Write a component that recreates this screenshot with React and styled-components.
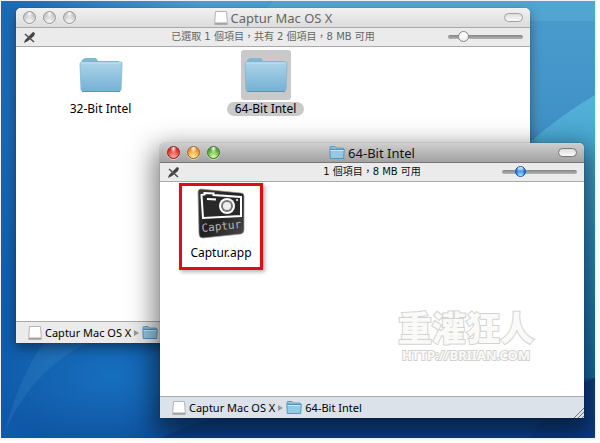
import React, { useState } from 'react';
import styled, { createGlobalStyle } from 'styled-components';

const GlobalStyle = createGlobalStyle`
  body {
    margin: 0;
    background: #fff;
    font-family: "Noto Sans", "Noto Sans CJK TC", sans-serif;
    color: #000;
  }
  * {
    box-sizing: border-box;
  }
`;
const Desktop = styled.main`
  position: relative;
  height: calc(100vh - 6px);
  margin: 1px 5px 5px 1px;
  overflow: hidden;
  background: #0f5cab;
  box-shadow: 0 0 4px #d5dbe6;
`;
const Wallpaper = styled.svg`
  display: block;
  width: 100%;
  height: 100%;
`;
const Window = styled.section`
  position: absolute;
  inset: ${({ $inset }) => $inset};
  display: flex;
  flex-direction: column;
  overflow: hidden;
  border-radius: 5px 5px 0 0;
  background: #fff;
  box-shadow: ${({ $active }) => $active
    ? "0 0 1px rgba(0, 0, 0, 0.6), 0 10px 26px 6px rgba(0, 0, 0, 0.5)"
    : "0 0 1px rgba(0, 0, 0, 0.4), 0 5px 12px rgba(0, 0, 0, 0.4)"};
`;
const TitleBar = styled.header`
  display: grid;
  grid-template-columns: 68px 1fr 68px;
  align-items: center;
  flex: none;
  height: 20px;
  padding: 0 7px;
  border-bottom: 1px solid ${({ $active }) => $active ? "#777" : "#a9a9a9"};
  background: ${({ $active }) => $active
    ? "linear-gradient(#cfcfcf, #a2a2a2)"
    : "linear-gradient(#f1f1f1, #dcdcdc)"};
`;
const Lights = styled.div`
  display: flex;
  gap: 7px;
`;
const Light = styled.button`
  width: 13px;
  height: 13px;
  padding: 0;
  border: 1px solid ${({ $edge }) => $edge};
  border-radius: 50%;
  background:
    radial-gradient(ellipse at 50% 12%, rgba(255, 255, 255, 0.95) 0, rgba(255, 255, 255, 0) 38%),
    radial-gradient(circle at 50% 90%, ${({ $glow }) => $glow} 10%, ${({ $fill }) => $fill} 65%);
  box-shadow: 0 1px 0 rgba(255, 255, 255, 0.5);
`;
const Title = styled.h1`
  display: flex;
  align-items: center;
  justify-content: center;
  gap: 3px;
  margin: 0;
  font-size: 13px;
  font-weight: 400;
  line-height: 18px;
  white-space: nowrap;
  color: ${({ $active }) => $active ? "#111" : "#666"};
`;
const Pill = styled.button`
  justify-self: end;
  width: 19px;
  height: 9px;
  padding: 0;
  border: 1px solid ${({ $active }) => $active ? "#777" : "#a0a0a0"};
  border-radius: 5px;
  background: linear-gradient(#ddd, #fafafa);
`;
const StatusBar = styled.div`
  display: grid;
  grid-template-columns: 76px 1fr 76px;
  align-items: center;
  flex: none;
  height: 19px;
  padding: 0 7px;
  border-bottom: 1px solid #aaa;
  background: #ebebeb;
`;
const Status = styled.span`
  font-family: "DejaVu Sans", "Noto Sans CJK TC", sans-serif;
  font-size: 10px;
  line-height: 16px;
  text-align: center;
  white-space: nowrap;
  color: ${({ $active }) => $active ? "#111" : "#666"};
`;
const Slider = styled.input`
  justify-self: end;
  width: 75px;
  height: 12px;
  margin: 0;
  appearance: none;
  background: transparent;

  &::-webkit-slider-runnable-track {
    height: 4px;
    border-radius: 2px;
    background: linear-gradient(#858585, #b5b5b5);
  }
  &::-webkit-slider-thumb {
    appearance: none;
    width: 11px;
    height: 11px;
    margin-top: -4px;
    border: 1px solid ${({ $active }) => $active ? "#1c56a8" : "#858585"};
    border-radius: 50%;
    background: ${({ $active }) => $active
      ? "linear-gradient(90deg, #2367c4, transparent 30%, transparent 70%, #2367c4), linear-gradient(#e4f4ff, #4e9ee8 50%, #9beaff)"
      : "linear-gradient(#fff, #eee)"};
  }
`;
const Body = styled.div`
  display: flex;
  align-items: flex-start;
  flex: 1;
  min-height: 0;
  padding: ${({ $pad }) => $pad};
`;
const Item = styled.figure`
  display: flex;
  flex-direction: column;
  align-items: center;
  gap: ${({ $gap }) => $gap || "2px"};
  width: 165px;
  margin: 0;
`;
const IconFrame = styled.div`
  display: grid;
  place-items: center;
  width: 50px;
  height: 50px;
  border-radius: 3px;
  background: ${({ $selected }) => $selected ? "#c9c9c9" : "none"};
`;
const Label = styled.figcaption`
  padding: 0 8px;
  border-radius: 7px;
  font-size: 12px;
  line-height: 14px;
  white-space: nowrap;
  background: ${({ $selected }) => $selected ? "#c9c9c9" : "none"};
`;
const Highlight = styled.div`
  display: flex;
  justify-content: center;
  width: 84px;
  height: 87px;
  padding-top: 2px;
  border: 3px solid #e30b12;
  box-shadow: 2px 2px 4px rgba(0, 0, 0, 0.3);
`;
const Watermark = styled.div`
  display: flex;
  flex-direction: column;
  align-self: flex-end;
  margin-left: auto;
  text-align: center;
  color: #fafaf8;
  -webkit-text-stroke: 2px #d3d3d0;
  paint-order: stroke;
`;
const WatermarkName = styled.div`
  font-family: "Noto Sans CJK TC", sans-serif;
  font-size: 34px;
  font-weight: 900;
  line-height: 36px;
`;
const WatermarkUrl = styled.div`
  font-size: 13px;
  font-weight: 700;
  line-height: 20px;
`;
const PathBar = styled.footer`
  display: flex;
  align-items: center;
  flex: none;
  gap: 3px;
  height: 22px;
  padding-left: 12px;
  border-top: 1px solid #aaa;
  background: ${({ $active }) => $active ? "#dbe2ea" : "#ebebeb"};
  font-size: 11px;
  line-height: 16px;
  white-space: nowrap;
`;
const Arrow = styled.svg`
  width: 5px;
  height: 6px;
  fill: #999;
`;
const Grip = styled.svg`
  align-self: flex-end;
  width: 12px;
  height: 12px;
  margin-left: auto;
`;

function Folder({ width, height }) {
  return (
    <svg width={width} height={height} viewBox="0 0 44 36" aria-hidden="true">
      <defs>
        <linearGradient id="folderFront" x1="0" y1="0" x2="0" y2="1">
          <stop offset="0" stopColor="#acd4e8" />
          <stop offset="1" stopColor="#75b1d4" />
        </linearGradient>
      </defs>
      <path d="M2 7l1-4 3-2h11l2 3h20l3 2v2H2z" fill="#82b7d3" />
      <path d="M1 7q0-2 2-2h39q1 0 1 2l-1 26q0 1-2 1H4q-2 0-2-1z" fill="url(#folderFront)" stroke="#82b5d0" strokeWidth=".8" />
      <path d="M2 6h40" stroke="#c3e4f2" />
      <path d="M3 34.5h38" stroke="#5c93b3" />
    </svg>
  );
}

function SmallFolder() {
  return (
    <svg width="16" height="13" viewBox="0 0 16 13" aria-hidden="true">
      <path d="M1 3V1.5q0-1 1-1h4l1.500 1.500H14l1 1v1z" fill="#8fc3df" stroke="#4d8fb8" strokeWidth=".8" />
      <path d="M.8 3.500h14.400l-.5 9H1.300z" fill="#94c9e5" stroke="#4d8fb8" strokeWidth=".9" />
      <path d="M1.500 4.500h13" stroke="#c8e6f4" />
    </svg>
  );
}

function Disk() {
  return (
    <svg width="14" height="14" viewBox="0 0 14 14" aria-hidden="true">
      <path d="M1.5.5h11l.8 11v2H.7v-2z" fill="#fdfdfd" stroke="#b5b5b5" />
      <path d="M1 11.5h12v2H1z" fill="#a5a5a5" />
    </svg>
  );
}

function Pencil() {
  return (
    <svg width="13" height="13" viewBox="0 0 13 13" aria-label="Read only" role="img">
      <path d="M1 12l1-3 6-6 2-2 2 1-1 3-6 5z" fill="#444" />
      <path d="M2 3l9 8" stroke="#555" strokeWidth="1.6" />
    </svg>
  );
}

function CapturIcon() {
  return (
    <svg width="50" height="52" viewBox="0 0 50 52" aria-hidden="true">
      <defs>
        <linearGradient id="plate" x1="0" y1="0" x2="1" y2="1">
          <stop offset="0" stopColor="#3d3d3d" />
          <stop offset=".5" stopColor="#1f1f1f" />
          <stop offset="1" stopColor="#4c4c4c" />
        </linearGradient>
      </defs>
      <path d="M5 1Q2 1 2 4l1 42q0 4 4 4l38-4q3-1 3-4V8q0-3-3-3z" fill="url(#plate)" stroke="#999" strokeWidth=".7" />
      <path d="M5.500 7l3-.5V5l9 .5V7L45 9v19L7 30z" fill="#282828" stroke="#fff" strokeWidth="2" />
      <path d="M11 11l9 .5" stroke="#fff" strokeWidth="2" />
      <circle cx="31" cy="18" r="8" fill="#fff" />
      <circle cx="31" cy="18" r="6" fill="#777" />
      <circle cx="31" cy="18" r="4" fill="#eee" />
      <circle cx="41" cy="12" r="1" fill="#fff" />
      <text x="6" y="44" transform="rotate(-6 6 44)" fill="#b5b5b5" fontFamily="DejaVu Sans Mono, monospace" fontSize="11">Captur</text>
    </svg>
  );
}

function Background() {
  return (
    <Wallpaper viewBox="0 0 594 437" preserveAspectRatio="none" aria-hidden="true">
      <defs>
        <linearGradient id="sky" x1="0" y1="0" x2="0" y2="1">
          <stop offset="0" stopColor="#4b9dce" />
          <stop offset=".3" stopColor="#4090c6" />
          <stop offset=".65" stopColor="#1562b0" />
          <stop offset="1" stopColor="#0e4c99" />
        </linearGradient>
        <linearGradient id="left" x1="0" y1="0" x2="1" y2="0">
          <stop offset="0" stopColor="#0f5cab" stopOpacity=".8" />
          <stop offset="1" stopColor="#0f5cab" stopOpacity="0" />
        </linearGradient>
        <linearGradient id="beam" x1="0" y1="0" x2="0" y2="1">
          <stop offset="0" stopColor="#55b3da" />
          <stop offset=".5" stopColor="#2f8dbf" />
          <stop offset="1" stopColor="#176ba9" />
        </linearGradient>
        <radialGradient id="glow">
          <stop offset="0" stopColor="#176fbe" />
          <stop offset="1" stopColor="#176fbe" stopOpacity="0" />
        </radialGradient>
      </defs>
      <path d="M0 0h594v437H0z" fill="url(#sky)" />
      <path d="M0 0h200v437H0z" fill="url(#left)" />
      <path d="M272 0h322v20H255z" fill="#62b9d6" opacity=".3" />
      <path d="M594 94Q560 114 529 141v240l65-4z" fill="url(#beam)" />
      <path d="M594 377Q560 388 529 437h65z" fill="#0c418a" />
      <ellipse cx="110" cy="375" rx="120" ry="70" fill="url(#glow)" />
      <path d="M4 430Q20 370 46 338h50Q34 363 4 430z" fill="#4a97cf" opacity=".2" />
      <path d="M160 437q40-20 80-22h354v22z" fill="#0a3c83" opacity=".5" />
    </Wallpaper>
  );
}

const activeLights = [
  { name: "Close", edge: "#8d2424", fill: "#d93431", glow: "#ff9890" },
  { name: "Minimize", edge: "#a2652a", fill: "#ec9130", glow: "#ffe68c" },
  { name: "Zoom", edge: "#41722f", fill: "#57a63d", glow: "#c9f590" },
];
const idleLights = activeLights.map(({ name }) => ({ name, edge: "#979797", fill: "#c9c9c9", glow: "#f2f2f2" }));

function FinderWindow({ title, icon, status, zoom, active, inset, pad, children }) {
  const [size, setSize] = useState(zoom);
  const lights = active ? activeLights : idleLights;

  return (
    <Window $inset={inset} $active={active} aria-label={title}>
      <TitleBar $active={active}>
        <Lights>
          {lights.map(({ name, edge, fill, glow }) => (
            <Light key={name} type="button" aria-label={name} $edge={edge} $fill={fill} $glow={glow} />
          ))}
        </Lights>
        <Title $active={active}>{icon}{title}</Title>
        <Pill type="button" aria-label="Toggle toolbar" $active={active} />
      </TitleBar>
      <StatusBar>
        <Pencil />
        <Status $active={active}>{status}</Status>
        <Slider type="range" aria-label="Icon size" value={size} onChange={(e) => setSize(e.target.value)} $active={active} />
      </StatusBar>
      <Body $pad={pad}>{children}</Body>
      <PathBar $active={active}>
        <Disk />
        <span>Captur Mac OS X</span>
        <Arrow viewBox="0 0 5 6"><path d="M0 0l5 3-5 3z" /></Arrow>
        <SmallFolder />
        <span>64-Bit Intel</span>
        {active && (
          <Grip viewBox="0 0 12 12"><path d="M2 12L12 2M6 12l6-6M10 12l2-2" stroke="#777" /></Grip>
        )}
      </PathBar>
    </Window>
  );
}

function App() {
  return (
    <>
      <GlobalStyle />
      <Desktop>
        <Background />
        <FinderWindow
          title="Captur Mac OS X"
          icon={<Disk />}
          status="已選取 1 個項目，共有 2 個項目，8 MB 可用"
          zoom={16}
          inset="7px 65px 95px 15px"
          pad="3px 0 0 2px"
        >
          <Item>
            <IconFrame><Folder width={44} height={36} /></IconFrame>
            <Label>32-Bit Intel</Label>
          </Item>
          <Item>
            <IconFrame $selected><Folder width={44} height={36} /></IconFrame>
            <Label $selected>64-Bit Intel</Label>
          </Item>
        </FinderWindow>
        <FinderWindow
          active
          title="64-Bit Intel"
          icon={<SmallFolder />}
          status="1 個項目，8 MB 可用"
          zoom={20}
          inset="142px 11px 20px 159px"
          pad="1px 50px 31px 19px"
        >
          <Highlight>
            <Item $gap="6px">
              <CapturIcon />
              <Label>Captur.app</Label>
            </Item>
          </Highlight>
          <Watermark>
            <WatermarkName>重灌狂人</WatermarkName>
            <WatermarkUrl>HTTP://BRIIAN.COM</WatermarkUrl>
          </Watermark>
        </FinderWindow>
      </Desktop>
    </>
  );
}

export default App;
